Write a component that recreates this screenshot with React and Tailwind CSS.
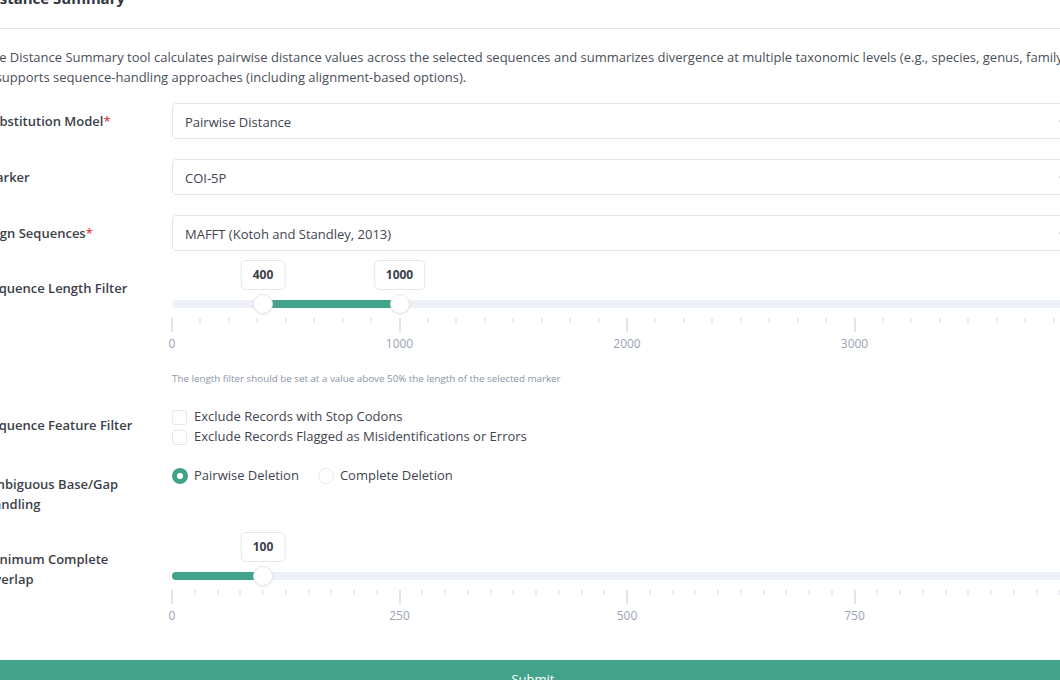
const GREEN = "#43a38a";

const Label = ({ children, required, className = "" }) => (
  <div className={`w-[188px] shrink-0 pr-4 text-[13px] leading-[20px] font-semibold text-[#3b3f4a] ${className}`}>
    {children}
    {required && <span className="text-[#e5484d]">*</span>}
  </div>
);

const Select = ({ value }) => (
  <div className="flex-1 h-[36px] border border-[#e4e4e4] rounded-[4px] flex items-center justify-between pl-3 pr-3 pt-[3px] text-[13px] text-[#3f4450]">
    <span>{value}</span>
    <svg width="10" height="6" viewBox="0 0 10 6" fill="none">
      <path d="M1 1l4 4 4-4" stroke="#9ca3af" strokeWidth="1.4" strokeLinecap="round" strokeLinejoin="round" />
    </svg>
  </div>
);

const TRACK_W = 910;

const Slider = ({ max, values, divisions, majorEvery, labels }) => {
  const pos = (v) => (v / max) * TRACK_W;
  const ticks = Array.from({ length: divisions + 1 }, (_, i) => i);
  const lo = values.length > 1 ? pos(values[0]) : 0;
  const hi = pos(values[values.length - 1]);

  return (
    <div className="relative h-[92px] w-[910px]">
      {values.map((v) => (
        <div
          key={"b" + v}
          className="absolute top-0 h-[30px] -translate-x-1/2 px-[11px] flex items-center border border-[#e5e7eb] rounded-[5px] bg-white text-[12px] font-bold text-[#3b3f4a]"
          style={{ left: pos(v) }}
        >
          {v}
        </div>
      ))}
      <div className="absolute left-0 right-0 top-[40px] h-[8px] rounded-full bg-[#edf0f4]" />
      <div
        className="absolute top-[40px] h-[8px] rounded-full"
        style={{ left: lo, width: hi - lo, backgroundColor: GREEN }}
      />
      {values.map((v) => (
        <div
          key={"t" + v}
          className="absolute top-[34px] w-[20px] h-[20px] -translate-x-1/2 rounded-full bg-white border border-[#e5e7eb] shadow-[0_1px_2px_rgba(0,0,0,0.08)]"
          style={{ left: pos(v) }}
        />
      ))}
      {ticks.map((i) => {
        const major = i % majorEvery === 0;
        return (
          <div
            key={"k" + i}
            className={`absolute top-[58px] w-[2px] -translate-x-1/2 ${major ? "h-[14px] bg-[#e2e6ec]" : "h-[5px] bg-[#e9ecf0]"}`}
            style={{ left: (i / divisions) * TRACK_W }}
          />
        );
      })}
      {labels.map((l) => (
        <div
          key={"l" + l}
          className="absolute top-[76px] leading-[16px] text-[12px] text-[#9aa4b6] -translate-x-1/2"
          style={{ left: pos(l) }}
        >
          {l}
        </div>
      ))}
    </div>
  );
};

const Checkbox = ({ label }) => (
  <div className="flex items-center h-[20px]">
    <div className="w-[15px] h-[15px] border border-[#e5e7eb] rounded-[3px] bg-white" />
    <span className="ml-[7px] text-[13px] text-[#3f4450]">{label}</span>
  </div>
);

const Radio = ({ label, checked }) => (
  <div className="flex items-center h-[20px]">
    {checked ? (
      <div className="w-[16px] h-[16px] rounded-full flex items-center justify-center" style={{ backgroundColor: GREEN }}>
        <div className="w-[6px] h-[6px] rounded-full bg-white" />
      </div>
    ) : (
      <div className="w-[16px] h-[16px] rounded-full border border-[#e5e7eb] bg-white" />
    )}
    <span className="ml-[6px] text-[13px] text-[#3f4450]">{label}</span>
  </div>
);

export default function App() {
  return (
    <div className="w-[1060px] h-[680px] overflow-hidden bg-white" style={{ fontFamily: '"Open Sans", "Noto Sans", sans-serif' }}>
      <div className="ml-[-16px] mt-[-14px] w-[1098px]">
        <div className="pb-[18px] border-b border-[#e5e5e5]">
          <h1 className="text-[15px] leading-[24px] font-bold text-[#33363f]">Distance Summary</h1>
        </div>

        <p className="mt-[18px] text-[13px] leading-[20px] text-[#4a4f5a]">
          The Distance Summary tool calculates pairwise distance values across the selected sequences and summarizes divergence at multiple taxonomic levels (e.g., species, genus, family).
          <br />
          It supports sequence-handling approaches (including alignment-based options).
        </p>

        <div className="mt-4 flex items-center">
          <Label required>Substitution Model</Label>
          <Select value="Pairwise Distance" />
        </div>
        <div className="mt-5 flex items-center">
          <Label>Marker</Label>
          <Select value="COI-5P" />
        </div>
        <div className="mt-5 flex items-center">
          <Label required>Align Sequences</Label>
          <Select value="MAFFT (Kotoh and Standley, 2013)" />
        </div>

        <div className="mt-[9px] flex items-start">
          <Label className="pt-[18px]">Sequence Length Filter</Label>
          <div className="flex-1">
            <Slider max={4000} values={[400, 1000]} divisions={32} majorEvery={8} labels={[0, 1000, 2000, 3000, 4000]} />
            <p className="mt-[21px] text-[9.8px] leading-[12px] text-[#8a94a6]">
              The length filter should be set at a value above 50% the length of the selected marker
            </p>
          </div>
        </div>

        <div className="mt-[22px] flex items-start">
          <Label className="pt-[8px]">Sequence Feature Filter</Label>
          <div className="flex-1">
            <Checkbox label="Exclude Records with Stop Codons" />
            <Checkbox label="Exclude Records Flagged as Misidentifications or Errors" />
          </div>
        </div>

        <div className="mt-[19px] flex items-start">
          <Label className="pt-[8px] pr-[30px]">Ambiguous Base/Gap Handling</Label>
          <div className="flex-1 flex gap-[19px]">
            <Radio label="Pairwise Deletion" checked />
            <Radio label="Complete Deletion" />
          </div>
        </div>

        <div className="mt-[18px] flex items-start">
          <Label className="pt-[17px] pr-[30px]">Minimum Complete Overlap</Label>
          <div className="flex-1">
            <Slider max={1000} values={[100]} divisions={40} majorEvery={10} labels={[0, 250, 500, 750, 1000]} />
          </div>
        </div>

        <button
          className="mt-[36px] w-full h-[40px] text-white text-[13px] rounded-[4px]"
          style={{ backgroundColor: GREEN }}
        >
          Submit
        </button>
      </div>
    </div>
  );
}
